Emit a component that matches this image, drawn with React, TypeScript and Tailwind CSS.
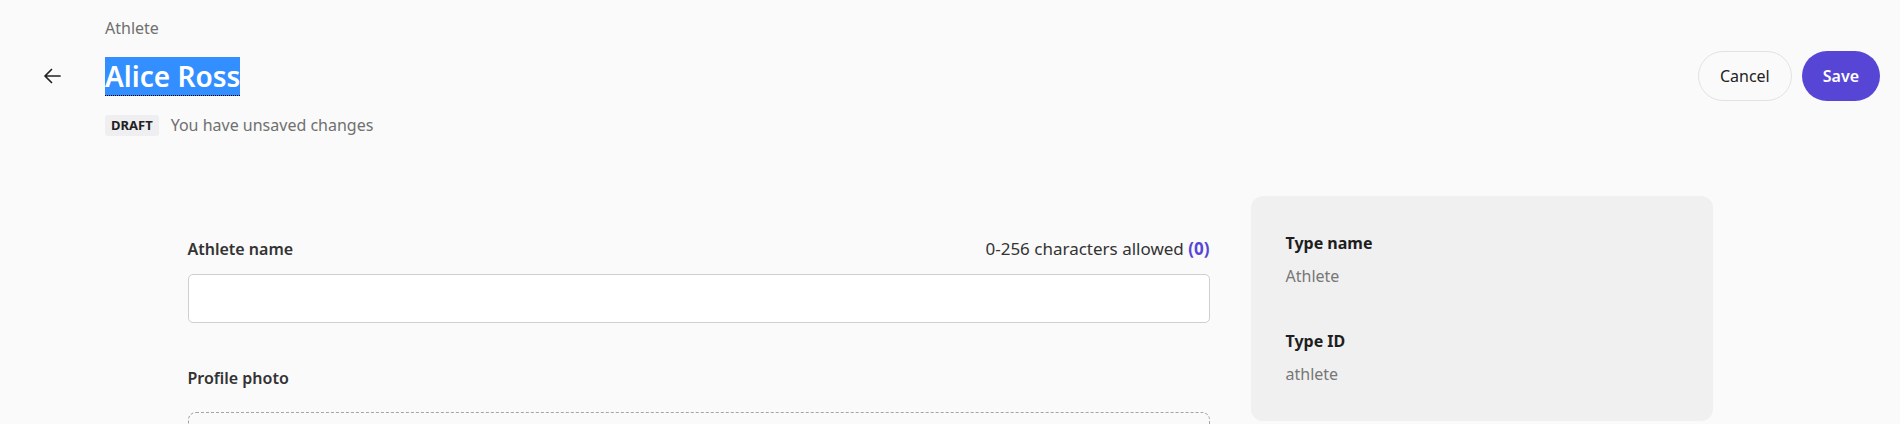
import { useState } from "react";

function BackArrow() {
  return (
    <svg width="18" height="16" viewBox="0 0 18 16" fill="none">
      <path
        d="M17 8H2M8.5 1.5 2 8l6.5 6.5"
        stroke="#222"
        strokeWidth="1.7"
        strokeLinecap="round"
        strokeLinejoin="round"
      />
    </svg>
  );
}

export default function App() {
  const [name, setName] = useState("");

  return (
    <div className="min-h-[424px] bg-[#fafafa] font-['Segoe_UI','Noto_Sans',sans-serif] text-[#2b2b2b]">
      {/* Header */}
      <div className="flex pl-8 pr-5 pt-4">
        <div className="w-[73px] pt-[40px]">
          <button className="flex h-10 w-10 items-center justify-center rounded-full">
            <BackArrow />
          </button>
        </div>
        <div className="flex-1">
          <div className="text-[16px] leading-6 text-[#707070]">Athlete</div>
          <h1 className="mt-4 text-[28px] font-semibold leading-[40px]">
            <span className="border-b border-dotted border-black bg-[#338fff] text-white">
              Alice Ross
            </span>
          </h1>
          <div className="mt-[17px] flex items-center gap-3">
            <span className="rounded-[3px] bg-[#efeff1] px-1.5 text-[13px] font-bold leading-[21px] text-[#222]">
              DRAFT
            </span>
            <span className="text-[16px] leading-6 text-[#707070]">
              You have unsaved changes
            </span>
          </div>
        </div>
        <div className="flex gap-2.5 pt-[35px]">
          <button className="h-[50px] rounded-full border border-[#e2e2e2] bg-[#fafafa] px-[21px] text-[16px] text-[#222]">
            Cancel
          </button>
          <button className="h-[50px] rounded-full bg-[#5746d6] px-[21px] text-[16px] font-semibold text-white">
            Save
          </button>
        </div>
      </div>

      {/* Body */}
      <div className="mx-auto mt-[59px] flex w-[1525px] gap-[41px]">
        <div className="flex-1 pt-[41px]">
          <div className="flex items-center justify-between">
            <label className="text-[16px] font-semibold leading-6 text-[#333]">
              Athlete name
            </label>
            <span className="text-[17px] leading-6 text-[#333]">
              0-256 characters allowed{" "}
              <span className="font-bold text-[#5746d6]">({name.length})</span>
            </span>
          </div>
          <input
            value={name}
            onChange={e => setName(e.target.value)}
            className="mt-[13px] block h-[49px] w-full rounded-[5px] border border-[#cfcfcf] bg-white px-3 outline-none"
          />
          <div className="mt-[43px] text-[16px] font-semibold leading-6 text-[#333]">
            Profile photo
          </div>
          <div className="mt-[22px] h-[150px] rounded-[8px] border border-dashed border-[#a5a5a5]"></div>
        </div>

        <div className="h-[225px] w-[462px] rounded-xl bg-[#f0f0f0] px-[35px] pt-[35px]">
          <div className="text-[16px] font-bold leading-6 text-[#1e1e1e]">Type name</div>
          <div className="mt-[9px] text-[16px] leading-6 text-[#777]">Athlete</div>
          <div className="mt-[41px] text-[16px] font-bold leading-6 text-[#1e1e1e]">Type ID</div>
          <div className="mt-[9px] text-[16px] leading-6 text-[#777]">athlete</div>
        </div>
      </div>
    </div>
  );
}
